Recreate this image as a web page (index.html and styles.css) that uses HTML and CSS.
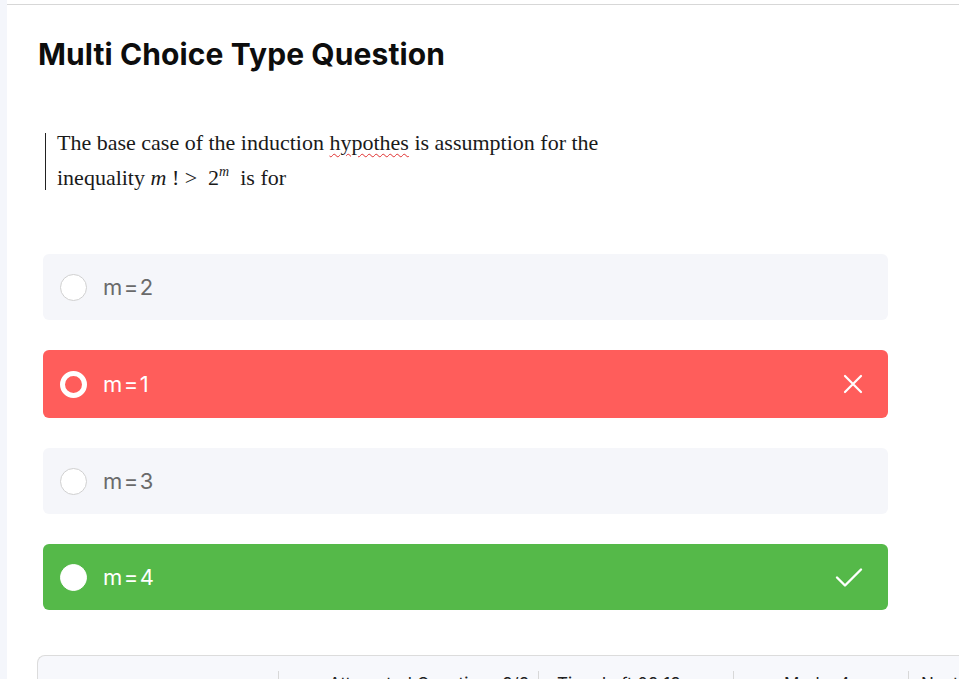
FILE: index.html
```html
<!DOCTYPE html>
<html lang="en">
<head>
<meta charset="utf-8">
<title>Multi Choice Type Question</title>
<link rel="stylesheet" href="styles.css">
</head>
<body>
<div class="page">
  <aside class="rail"></aside>
  <main class="panel">
    <h1 class="title">Multi Choice Type Question</h1>
    <div class="question">
      <p>The base case of the induction <span class="typo">hypothes</span> is assumption for the<br>inequality <i class="math">m</i> ! &gt;&nbsp; 2<sup class="math">m</sup>&nbsp; is for</p>
    </div>
    <ul class="options">
      <li class="option">
        <span class="radio"></span>
        <span class="label">m=2</span>
      </li>
      <li class="option wrong">
        <span class="radio"></span>
        <span class="label">m=1</span>
        <svg class="mark" width="22" height="22" viewBox="0 0 22 22"><path d="M3 3 L19 19 M19 3 L3 19" stroke="#fff" stroke-width="2.2" stroke-linecap="round" fill="none"/></svg>
      </li>
      <li class="option">
        <span class="radio"></span>
        <span class="label">m=3</span>
      </li>
      <li class="option right">
        <span class="radio"></span>
        <span class="label">m=4</span>
        <svg class="mark" width="28" height="22" viewBox="0 0 28 22"><path d="M2 11.5 L10 19.5 L26 3.5" stroke="#fff" stroke-width="2.4" stroke-linecap="round" stroke-linejoin="round" fill="none"/></svg>
      </li>
    </ul>
    <div class="toolbar">
      <div class="cell c1">&nbsp;</div>
      <div class="cell c2">Attempted Questions 2/3</div>
      <div class="cell c3">Time Left 02:13</div>
      <div class="cell c4">Marks 4</div>
      <div class="cell c5">Next</div>
    </div>
  </main>
</div>
</body>
</html>
```
FILE: styles.css
```css
html, body {
  margin: 0;
  padding: 0;
  height: 679px;
  overflow: hidden;
  background: #ffffff;
}
.page {
  display: flex;
  height: 679px;
  font-family: "Inter", "Open Sans", sans-serif;
}
.rail {
  width: 7px;
  flex: none;
  background: #f4f6fb;
}
.panel {
  flex: 1;
  margin-top: 4px;
  border-top: 1px solid #d7d7d7;
  background: #fff;
  overflow: hidden;
}
.title {
  margin: 31px 0 0 31px;
  font-size: 30px;
  line-height: 36px;
  font-weight: 700;
  letter-spacing: 0.1px;
  color: #0d0d0d;
}
.question {
  margin: 53px 0 0 38px;
  padding-left: 12px;
  background: linear-gradient(#222, #222) no-repeat 0 8px / 1px 57px;
}
.question p {
  margin: 0;
  font-family: "Liberation Serif", "DejaVu Serif", serif;
  font-size: 22px;
  line-height: 35px;
  color: #1a1a1a;
}
.typo {
  text-decoration: underline wavy #e03030;
  text-decoration-thickness: 1px;
  text-underline-offset: 3px;
}
.math {
  font-style: italic;
}
sup.math {
  font-size: 14px;
  vertical-align: 9px;
  line-height: 0;
}
.options {
  list-style: none;
  margin: 59px 0 0 36px;
  padding: 0;
  width: 845px;
  display: flex;
  flex-direction: column;
  gap: 30px;
}
.option {
  height: 66px;
  border-radius: 6px;
  background: #f5f6fa;
  display: flex;
  align-items: center;
  padding: 0 16px 0 17px;
  color: #6a6a6a;
  font-size: 22px;
  letter-spacing: 1.5px;
}
.option.wrong {
  background: #ff5d5b;
  color: #fff;
  height: 68px;
}
.option.right {
  background: #55b949;
  color: #fff;
}
.radio {
  width: 25px;
  height: 25px;
  border-radius: 50%;
  background: #fff;
  border: 1px solid #d0d0d0;
  flex: none;
}
.wrong .radio {
  width: 17px;
  height: 17px;
  border: 5px solid #fff;
  background: transparent;
}
.right .radio {
  border-color: #fff;
}
.label {
  margin-left: 16px;
  flex: 1;
}
.mark {
  margin-right: 8px;
}
.right .mark {
  margin-right: 9px;
}
.toolbar {
  margin: 45px 0 0 30px;
  height: 60px;
  border: 1px solid #dcdcdc;
  border-right: none;
  border-top-left-radius: 8px;
  background: #f7f8fc;
  display: flex;
  padding-top: 15px;
  font-size: 17px;
  line-height: 20px;
  color: #222;
}
.cell {
  flex: none;
  box-sizing: border-box;
  padding: 3px 12px 0;
  white-space: nowrap;
}
.c1 { width: 240px; }
.c2 { width: 260px; border-left: 1px solid #d8d8d8; padding-left: 50px; }
.c3 { width: 195px; border-left: 1px solid #d8d8d8; padding-left: 18px; }
.c4 { width: 175px; border-left: 1px solid #d8d8d8; padding-left: 50px; }
.c5 { flex: 1; border-left: 1px solid #d8d8d8; }
```
